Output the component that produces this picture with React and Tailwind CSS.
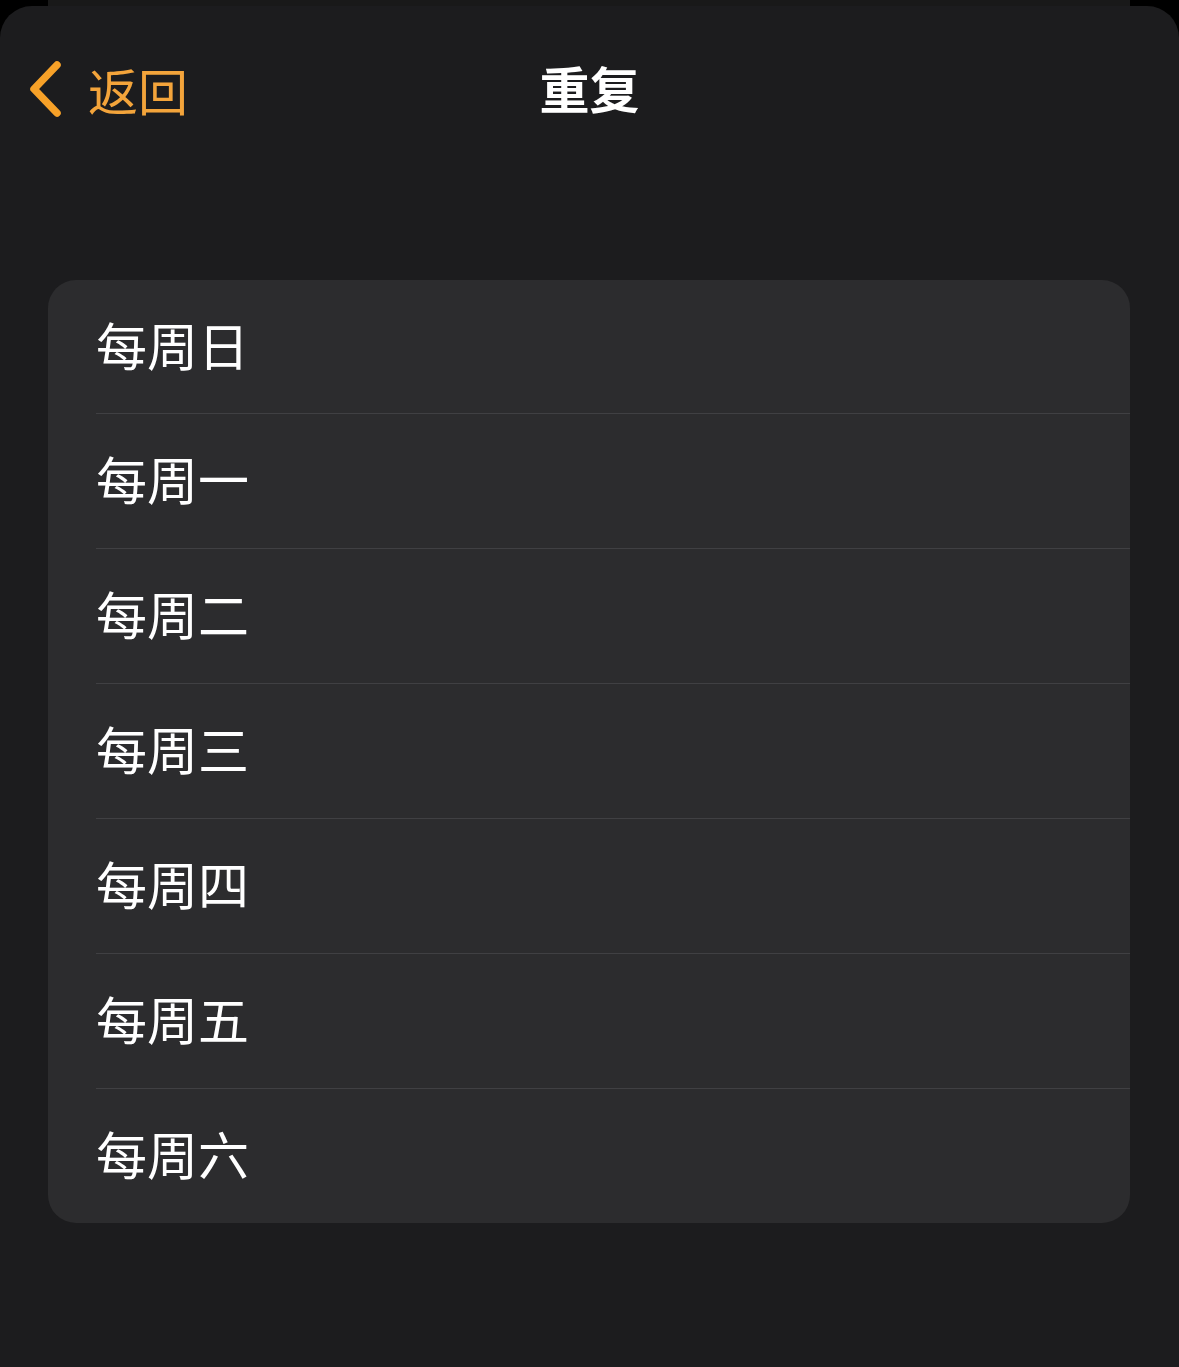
import React from "react";

const days = ["每周日", "每周一", "每周二", "每周三", "每周四", "每周五", "每周六"];

export default function App() {
  return (
    <div
      className="w-[1179px] h-[1367px] bg-black flex flex-col overflow-hidden"
      style={{ fontFamily: '"Noto Sans CJK SC", "Noto Sans", sans-serif' }}
    >
      <div className="h-[6px] mx-[48px] w-[1082px] bg-[#191919] shrink-0" />
      <div className="flex-1 bg-[#1c1c1e] rounded-t-[32px] flex flex-col">
        <div className="h-[170px] relative flex items-start pt-[51px]">
          <div className="flex items-center pl-[26px] gap-[24px]">
            <svg width="38" height="60" viewBox="0 0 38 60" fill="none">
              <path d="M31 6 L8 30 L31 54" stroke="#f7a128" strokeWidth="7.5" strokeLinecap="round" strokeLinejoin="round" />
            </svg>
            <span className="text-[#f3a43b] text-[50px] leading-[64px]">返回</span>
          </div>
          <div className="absolute left-0 right-0 top-[49px] flex justify-center">
            <span className="text-white text-[50px] leading-[64px] font-bold">重复</span>
          </div>
        </div>
        <div className="h-[104px]" />
        <div className="mx-[48px] w-[1082px] bg-[#2c2c2e] rounded-[28px] flex flex-col overflow-hidden">
          {days.map((d, i) => (
            <div key={d} className="flex flex-col">
              {i > 0 && <div className="ml-[48px] h-[1px] bg-[#404043]" />}
              <div className={`${i === 0 ? "h-[133px]" : "h-[134px]"} flex items-center pl-[48px] pb-[6px]`}>
                <span className="text-white text-[51px] leading-[60px]">{d}</span>
              </div>
            </div>
          ))}
        </div>
      </div>
    </div>
  );
}
